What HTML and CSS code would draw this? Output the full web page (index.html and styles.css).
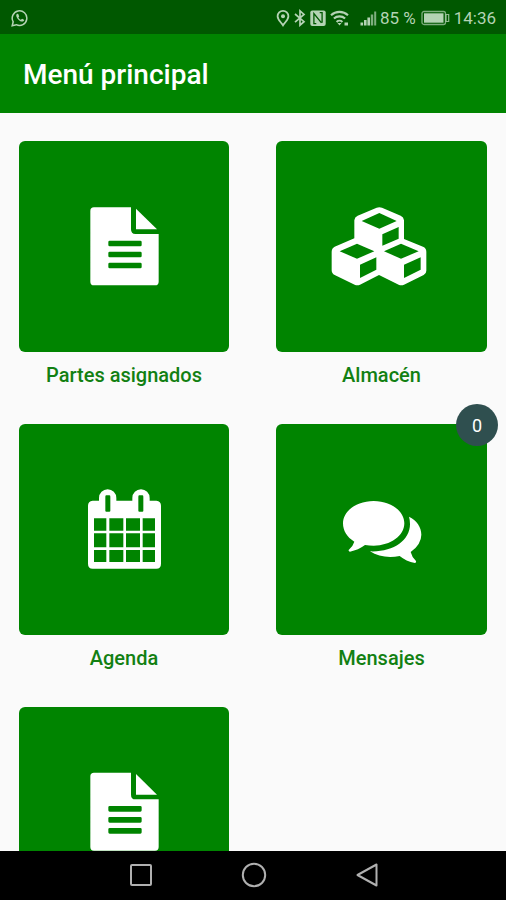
FILE: index.html
```html
<!DOCTYPE html>
<html lang="es">
<head>
  <meta charset="UTF-8">
  <meta name="viewport" content="width=device-width, initial-scale=1.0">
  <title>Menú principal</title>
  <link rel="stylesheet" href="styles.css">
</head>
<body>

  <!-- Status bar -->
  <div class="status-bar">
    <svg class="whatsapp" width="18" height="18" viewBox="0 0 18 18">
      <path d="M1.2 16.8l1-4A7.3 7.3 0 1 1 5.3 15.7z" fill="none" stroke="currentColor" stroke-width="1.5"/>
      <path d="M6 4.8c-1.3 1-.9 2.900.4 4.700 1.600 2.200 3.700 3.500 5.400 3 1-.3 1.500-1.300 1.200-1.800l-1.900-1-1.200 1.100c-1-.4-2-1.400-2.500-2.400l.8-1-.8-2.200c-.2-.5-.9-.7-1.400-.4z" fill="currentColor"/>
    </svg>
    <div class="status-icons">
      <svg width="14" height="18" viewBox="0 0 14 18">
        <path d="M7 1.900a5.400 5.400 0 0 1 5.400 5.400c0 3.500-3.400 5.700-5.400 9-2-3.300-5.400-5.500-5.400-9A5.400 5.400 0 0 1 7 1.900z" fill="none" stroke="currentColor" stroke-width="1.800"/>
        <circle cx="7" cy="7.300" r="2" fill="currentColor"/>
      </svg>
      <svg class="bluetooth" width="12" height="18" viewBox="0 0 12 18">
        <path d="M1 5l9 7.700-4 3.500V1.900l4 3.500-9 7.700" fill="none" stroke="currentColor" stroke-width="1.700"/>
      </svg>
      <svg class="nfc" width="16" height="18" viewBox="0 0 16 18">
        <rect x=".3" y="1.500" width="15.400" height="15.400" rx="2" fill="currentColor"/>
        <path d="M6.300 14.700H3.900V4.500l7.600 9.300M9.700 3.700h2.400v10" fill="none" stroke="#005800" stroke-width="1.300"/>
      </svg>
      <svg class="wifi" width="20" height="18" viewBox="0 0 20 18">
        <path d="M1 6.200a12.500 12.500 0 0 1 17 0M3.900 9.600a8.200 8.200 0 0 1 11.200 0M6.600 12.900a4.200 4.200 0 0 1 5.800 0" fill="none" stroke="currentColor" stroke-width="2.100"/>
        <path d="M7.500 13.900h4L9.500 16.500zM14.500 13.500h3.500v3h-3.500z" fill="currentColor"/>
      </svg>
      <svg class="signal" width="17" height="18" viewBox="0 0 17 18">
        <path d="M.5 13.500h2.600v3H.5zM4 11h2.600v5.500H4zM7.400 8.500H10v8H7.400z" fill="currentColor"/>
        <path d="M10.800 5.500h2.400v11h-2.400zM14.200 2.500h2v14h-2z" fill="currentColor" opacity=".7"/>
      </svg>
      <span class="percent">85 %</span>
      <svg class="battery" width="29" height="16" viewBox="0 0 29 16">
        <rect x="1" y="1.500" width="23.500" height="13" rx="2" fill="none" stroke="currentColor" stroke-width="1.300" opacity=".7"/>
        <rect x="3" y="3.300" width="19.500" height="9.400" fill="currentColor"/>
        <path d="M25 4.500h2.700v7H25z" fill="none" stroke="currentColor" stroke-width="1.200" opacity=".8"/>
      </svg>
      <span class="clock">14:36</span>
    </div>
  </div>

  <header>
    <h1>Menú principal</h1>
  </header>

  <main class="menu">
    <div class="item">
      <div class="tile">
        <svg class="icon" viewBox="-19 7 300 300">
          <path d="M41 38H152V104q0 14 13 14H235V261q0 11-11 11H41q-11 0-11-11V49q0-11 11-11zM88 138q-4 0-4 4v9q0 4 4 4h92q4 0 4-4v-9q0-4-4-4zM88 171q-4 0-4 4v9q0 4 4 4h92q4 0 4-4v-9q0-4-4-4zM88 204q-4 0-4 4v9q0 4 4 4h92q4 0 4-4v-9q0-4-4-4z"/>
          <path d="M167 42L230 104H167z"/>
        </svg>
      </div>
      <p class="label">Partes asignados</p>
    </div>

    <div class="item">
      <div class="tile">
        <svg class="icon" viewBox="35 6 300 300">
          <path fill-rule="evenodd" d="M169 38q8-3 16 0L241 62q9 4 10 14V132L308 155q10 4 10 15V227q0 9-8 13L251 269q-8 4-16 0L176 240 119 269q-8 4-16 0L43 240q-9-4-9-14V170q0-10 9-15L102 130V76q1-10 10-14zM177 54L124 78 177 101 229 78zM186 118V152L235 131V96zM110 146L58 169 110 191 162 169zM119 209V249L168 224V187zM242 146L191 169 242 191 295 169zM251 209V249L301 224V187z"/>
        </svg>
      </div>
      <p class="label">Almacén</p>
    </div>

    <div class="item">
      <div class="tile">
        <svg class="icon" viewBox="-18 0 300 300">
          <path fill-rule="evenodd" d="M38 62H57V54a26 26 0 0 1 52 0V62H157V54a26 26 0 0 1 52 0V62H229q14 2 14 15V251q0 15-14 15H38q-14 0-14-15V77q0-13 14-15zM79 46q-3 0-3 4V92q0 3 3 3h9q3 0 3-3V50q0-4-3-4zM178 46q-3 0-3 4V92q0 3 3 3h9q3 0 3-3V50q0-4-3-4zM42 115V152H79V115zM88 115V152H130V115zM138 115V152H180V115zM188 115V152H225V115zM42 160V202H79V160zM88 160V202H130V160zM138 160V202H180V160zM188 160V202H225V160zM42 210V246H79V210zM88 210V246H130V210zM138 210V246H180V210zM188 210V246H225V210z"/>
        </svg>
      </div>
      <p class="label">Agenda</p>
    </div>

    <div class="item">
      <div class="tile">
        <svg class="icon" viewBox="5 -15 300 300">
          <path d="M130 48C181 48 222 78 222 115S181 182 130 182Q117 182 104 180Q84 195 59 200Q54 200 55 195Q68 184 72 170C50 157 38 137 38 115C38 78 79 48 130 48z"/>
          <path d="M236 95C259 106 273 126 273 149Q273 178 241 201Q244 215 257 228Q259 233 254 234Q227 229 208 213C176 220 143 215 119 199C187 202 239 167 239 117Q239 105 236 95z"/>
        </svg>
        <span class="badge">0</span>
      </div>
      <p class="label">Mensajes</p>
    </div>

    <div class="item">
      <div class="tile">
        <svg class="icon" viewBox="-19 9 300 300">
          <path d="M41 38H152V104q0 14 13 14H235V261q0 11-11 11H41q-11 0-11-11V49q0-11 11-11zM88 138q-4 0-4 4v9q0 4 4 4h92q4 0 4-4v-9q0-4-4-4zM88 171q-4 0-4 4v9q0 4 4 4h92q4 0 4-4v-9q0-4-4-4zM88 204q-4 0-4 4v9q0 4 4 4h92q4 0 4-4v-9q0-4-4-4z"/>
          <path d="M167 42L230 104H167z"/>
        </svg>
      </div>
    </div>
  </main>

  <!-- Navigation bar -->
  <nav>
    <svg width="24" height="26" viewBox="0 0 24 26"><rect x="2" y="3" width="20" height="20" rx="1"/></svg>
    <svg width="26" height="26" viewBox="0 0 26 26"><circle cx="13" cy="13" r="11.200"/></svg>
    <svg width="24" height="26" viewBox="0 0 24 26"><path d="M21.500 2.500v21L2.500 13z" stroke-linejoin="round"/></svg>
  </nav>

</body>
</html>
```

FILE: styles.css
```css
* {
  box-sizing: border-box;
}

body {
  margin: 0;
  height: 100vh;
  display: flex;
  flex-direction: column;
  overflow: hidden;
  font-family: Roboto, sans-serif;
  background: #fafafa;
}

.status-bar {
  flex: none;
  height: 34px;
  padding: 1px 10px 0 11px;
  display: flex;
  justify-content: space-between;
  align-items: center;
  background: #005800;
  color: #b4d3b4;
}

.status-icons {
  display: flex;
  align-items: center;
}

.status-icons .bluetooth {
  margin-left: 4px;
}

.status-icons .nfc {
  margin-left: 4px;
}

.status-icons .wifi {
  margin-left: 4px;
}

.status-icons .signal {
  margin-left: 10px;
}

.percent {
  margin-left: 3px;
  font-size: 17px;
  white-space: nowrap;
}

.battery {
  margin-left: 5px;
}

.clock {
  margin-left: 4px;
  font-size: 17px;
}

header {
  flex: none;
  height: 79px;
  padding: 2px 23px 0;
  display: flex;
  align-items: center;
  background: #008400;
  color: white;
}

header h1 {
  margin: 0;
  font-size: 28px;
  font-weight: 500;
}

.menu {
  flex: 1;
  min-height: 0;
  overflow: hidden;
  padding: 28px 19px 0;
  display: grid;
  grid-template-columns: 210px 211px;
  grid-auto-rows: 283px;
  align-content: start;
  justify-content: space-between;
}

.tile {
  position: relative;
  height: 211px;
  border-radius: 6px;
  display: flex;
  align-items: center;
  justify-content: center;
  background: #008400;
}

.icon {
  width: 100px;
  height: 100px;
  fill: white;
  overflow: visible;
}

.label {
  margin: 11px 0 0;
  text-align: center;
  font-size: 20px;
  line-height: 24px;
  font-weight: 500;
  color: #128012;
}

.badge {
  position: absolute;
  top: -20px;
  right: -11px;
  width: 42px;
  height: 42px;
  border-radius: 50%;
  display: flex;
  align-items: center;
  justify-content: center;
  background: #2f4f4f;
  color: white;
  font-size: 18px;
}

nav {
  flex: none;
  height: 49px;
  padding: 0 0 1px 1px;
  display: flex;
  align-items: center;
  justify-content: center;
  gap: 88px;
  background: black;
}

nav svg {
  fill: none;
  stroke: #b0b0b0;
  stroke-width: 2;
}
```
